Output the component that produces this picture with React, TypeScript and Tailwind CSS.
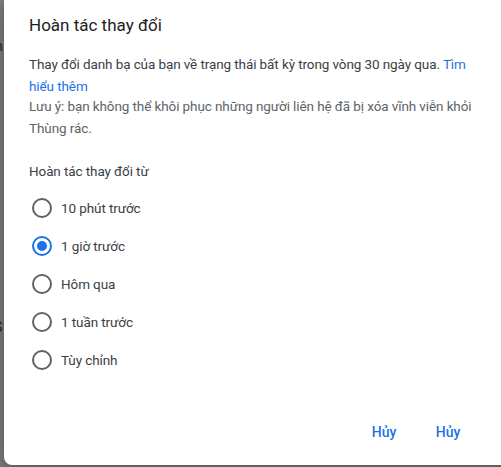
import { useState } from "react";

const options = [
  { id: "10m", label: "10 phút trước" },
  { id: "1h", label: "1 giờ trước" },
  { id: "yesterday", label: "Hôm qua" },
  { id: "1w", label: "1 tuần trước" },
  { id: "custom", label: "Tùy chỉnh" },
];

function Radio({ checked }: { checked: boolean }) {
  return (
    <span
      className={`flex h-[20px] w-[20px] items-center justify-center rounded-full border-2 ${
        checked ? "border-[#1a73e8]" : "border-[#5f6368]"
      }`}
    >
      {checked && <span className="h-[10px] w-[10px] rounded-full bg-[#1a73e8]" />}
    </span>
  );
}

export default function App() {
  const [selected, setSelected] = useState("1h");

  return (
    <div
      className="flex h-[467px] w-[501px] overflow-hidden bg-[#7d7d7d]"
      style={{ fontFamily: "Roboto, 'Noto Sans', sans-serif" }}
    >
      {/* backdrop page behind the dialog */}
      <div className="relative h-full w-[4px] shrink-0 overflow-hidden text-[14px] text-[#1f1f1f]">
        <span className="absolute left-[-5px] top-[36px]">n</span>
        <span className="absolute left-[-4px] top-[206px]">t</span>
        <span className="absolute left-[-6px] top-[317px]">S</span>
      </div>

      <div className="flex h-[465px] w-[510px] shrink-0 flex-col rounded-bl-[8px] bg-white px-[25px] pt-[13px] shadow-[0_4px_14px_rgba(0,0,0,0.35)]">
        <h2 className="text-[17px] leading-[24px] text-[#202124]">Hoàn tác thay đổi</h2>

        <div className="text-[13.5px] tracking-[-0.1px]">
          <p className="mt-[16px] leading-[22px] text-[#3c4043]">
            Thay đổi danh bạ của bạn về trạng thái bất kỳ trong vòng 30 ngày qua.{" "}
            <a className="text-[#1a73e8]">Tìm hiểu thêm</a>
          </p>
          <p className="mt-[-2px] leading-[22px] text-[#5f6368]">
            Lưu ý: bạn không thể khôi phục những người liên hệ đã bị xóa vĩnh viễn khỏi Thùng rác.
          </p>

          <p className="mt-[21px] leading-[22px] text-[#3c4043]">Hoàn tác thay đổi từ</p>

          <div className="mt-[7px] flex flex-col">
            {options.map((opt) => (
              <label
                key={opt.id}
                onClick={() => setSelected(opt.id)}
                className="flex h-[38px] cursor-pointer items-center gap-[9px] pl-[3px] text-[#3c4043]"
              >
                <Radio checked={selected === opt.id} />
                <span>{opt.label}</span>
              </label>
            ))}
          </div>
        </div>

        <div className="mt-auto mb-[15px] flex justify-end pr-[9px]">
          <button className="h-[36px] w-[64px] rounded text-[14px] font-medium text-[#1a73e8]">Hủy</button>
          <button className="h-[36px] w-[64px] rounded text-[14px] font-medium text-[#1a73e8]">Hủy</button>
        </div>
      </div>
    </div>
  );
}
